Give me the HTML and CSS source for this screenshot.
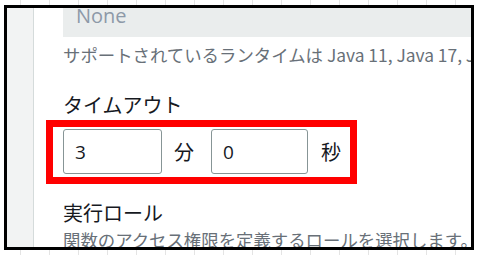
FILE: index.html
```html
<!DOCTYPE html>
<html lang="ja">
<head>
    <meta charset="UTF-8">
    <meta name="viewport" content="width=device-width, initial-scale=1.0">
    <title>タイムアウト設定</title>
    <link rel="stylesheet" href="styles.css">
</head>
<body>
    <div class="frame">
        <div class="sidebar"></div>
        <div class="content">
            <div class="readonly-box">None</div>
            <p class="hint">サポートされているランタイムは Java 11, Java 17, Java 21 です。</p>

            <div class="label">タイムアウト</div>
            <div class="highlight">
                <input class="num-input" type="text" value="3">
                <span class="unit unit-min">分</span>
                <input class="num-input" type="text" value="0">
                <span class="unit unit-sec">秒</span>
            </div>

            <div class="label label-role">実行ロール</div>
            <p class="hint">関数のアクセス権限を定義するロールを選択します。</p>
        </div>
    </div>
</body>
</html>
```

FILE: styles.css
```css
body {
    margin: 0;
    background-color: #fff;
    background-image: linear-gradient(to right, #e4e4e4 1px, transparent 1px);
    background-size: 29px 100%;
    background-position: 20px 0;
    font-family: 'Open Sans', 'Noto Sans CJK JP', sans-serif;
    width: 480px;
    height: 255px;
    overflow: hidden;
}

.frame {
    box-sizing: border-box;
    width: 470px;
    height: 245px;
    margin: 5px 0 0 4px;
    border: 3px solid #000;
    background: #fff;
    display: flex;
    overflow: hidden;
}

.sidebar {
    flex: 0 0 26px;
    background: #f2f3f3;
    border-right: 1px solid #d5dbdb;
}

.content {
    flex: 1;
    padding-left: 29px;
    min-width: 0;
    white-space: nowrap;
}

.readonly-box {
    margin-top: -12px;
    height: 41px;
    line-height: 39px;
    padding-left: 13px;
    background: #eaeded;
    color: #8d99a8;
    font-size: 20px;
}

.hint {
    margin: 6px 0 0;
    font-family: 'Noto Sans CJK JP', sans-serif;
    font-size: 17.4px;
    line-height: 24px;
    color: #687078;
}

.label {
    margin-top: 25px;
    font-size: 20px;
    line-height: 28px;
    color: #16191f;
}

.label-role {
    margin-top: 16px;
}

.label-role + .hint {
    margin-top: 0;
}

.highlight {
    display: inline-flex;
    align-items: center;
    margin-left: -17px;
    padding: 2px 9px 3px 10px;
    border: 7px solid #ff0000;
}

.num-input {
    box-sizing: border-box;
    width: 99px;
    height: 45px;
    padding: 0 0 0 11px;
    border: 1px solid #879596;
    border-radius: 3px;
    font-family: 'Open Sans', 'Noto Sans CJK JP', sans-serif;
    font-size: 19px;
    color: #16191f;
    outline: none;
}

.num-input + .unit + .num-input {
    width: 97px;
}

.unit {
    font-size: 20px;
    color: #16191f;
}

.unit-min {
    margin: 0 17px 0 12px;
}

.unit-sec {
    margin-left: 13px;
}
```
